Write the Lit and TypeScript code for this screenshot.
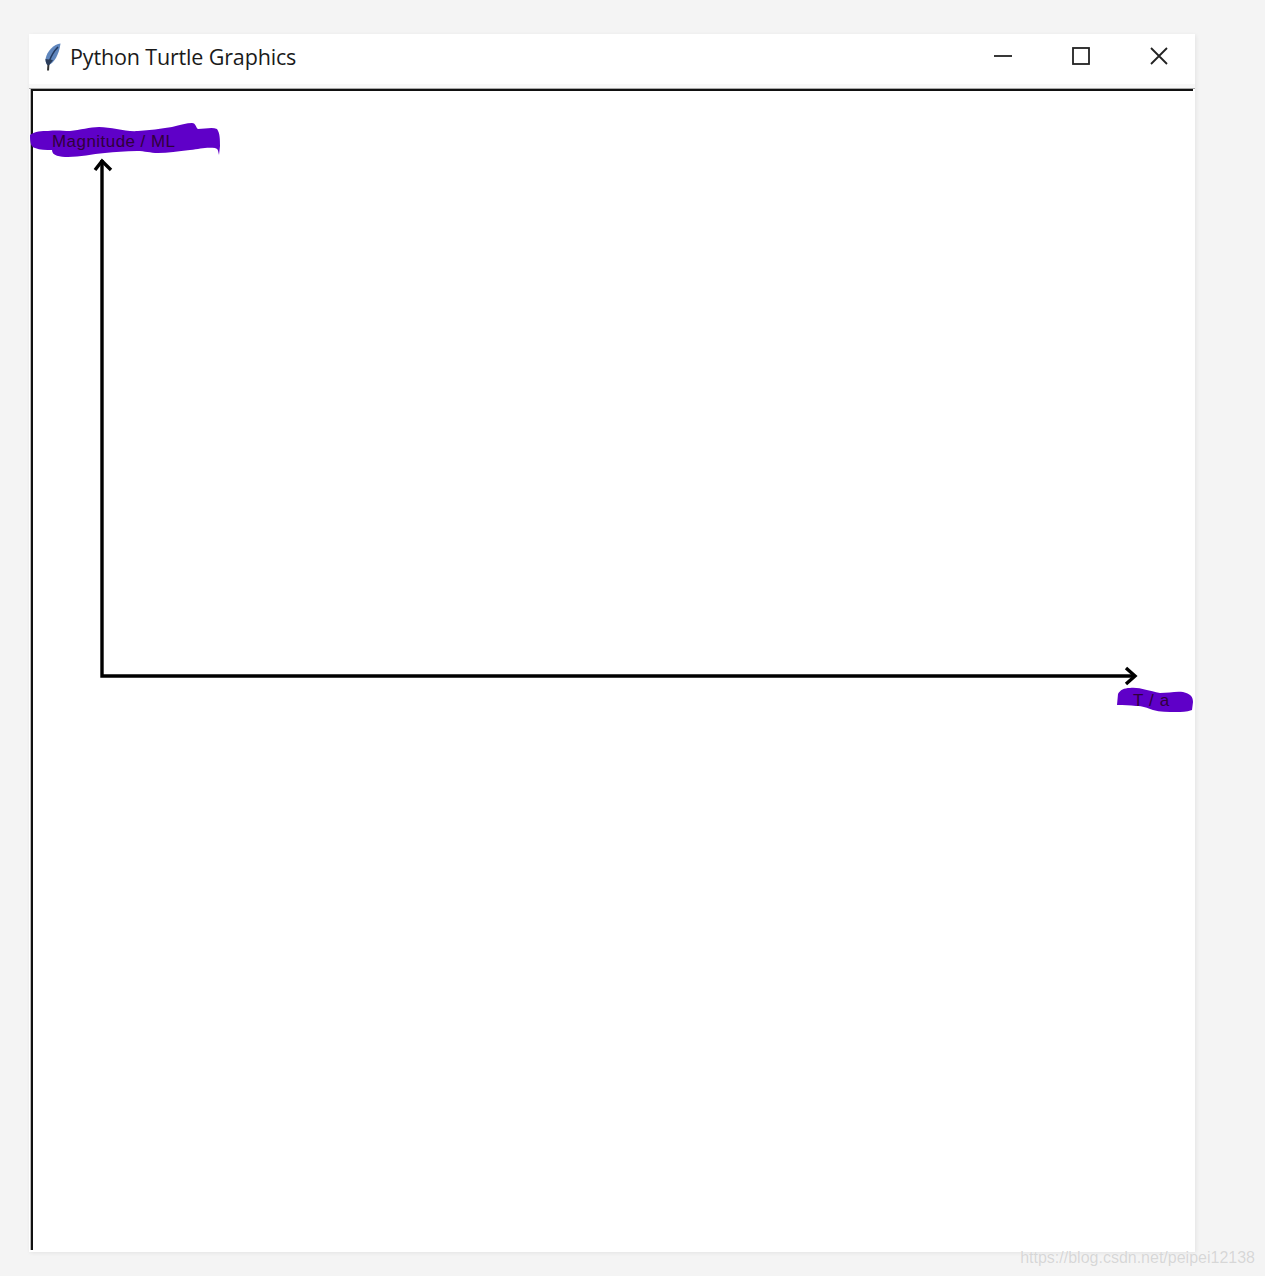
import { LitElement, html, css, svg } from "lit";
import { customElement } from "lit/decorators.js";

@customElement("app-root")
export class AppRoot extends LitElement {
  static styles = css`
    :host {
      display: block;
      position: relative;
      height: 1276px;
      box-sizing: border-box;
      padding: 34px 70px 24px 29px;
      background: #f4f4f4;
      overflow: hidden;
    }
    .window {
      height: 100%;
      display: flex;
      flex-direction: column;
      background: #fff;
      box-shadow: 1px 1px 4px rgba(0, 0, 0, 0.07);
    }
    .titlebar {
      flex: none;
      height: 50px;
      display: flex;
      align-items: center;
      padding-left: 14px;
      background: #fff;
    }
    .feather {
      flex: none;
      width: 20px;
      height: 30px;
      margin-top: -4px;
    }
    .title {
      flex: 1;
      margin-left: 7px;
      margin-top: -6px;
      font: 21.5px "Open Sans", "Noto Sans", sans-serif;
      letter-spacing: -0.15px;
      color: #1a1a1a;
      white-space: nowrap;
    }
    .controls {
      display: flex;
      margin-right: -3px;
      margin-top: -6px;
    }
    .control {
      width: 78px;
      height: 24px;
      display: flex;
      justify-content: center;
      align-items: center;
    }
    .control svg {
      width: 22px;
      height: 22px;
    }
    .gap {
      flex: none;
      height: 5px;
      background: linear-gradient(#f8f8f8 0 4px, #a8a8a8 4px);
    }
    .canvas {
      flex: 1;
      position: relative;
      margin: 0 2px 2px 2px;
      border-top: 2px solid #111;
      border-left: 2px solid #111;
      box-shadow: -1px 0 0 #b8b8b8;
      background: #fff;
    }
    .canvas-svg {
      position: absolute;
      left: 0;
      top: 0;
      width: 1160px;
      height: 1161px;
      overflow: visible;
    }
    .label {
      font: 17px "Liberation Sans", Arial, sans-serif;
      letter-spacing: 0.45px;
      fill: #30003c;
    }
    .label-small {
      font-size: 17px;
      letter-spacing: 0.6px;
    }
    .watermark {
      position: absolute;
      right: 10px;
      bottom: 9px;
      font: 16px "Liberation Sans", Arial, sans-serif;
      color: rgba(205, 205, 205, 0.8);
      text-shadow: 0 0 1px rgba(255, 255, 255, 0.8);
      white-space: nowrap;
    }
  `;

  render() {
    return html`
      <div class="window">
        <div class="titlebar">
          <svg class="feather" viewBox="0 0 20 30">
            <path d="M17.500 1.500 C11 2 4 9 2.500 17 C2.500 20 3.500 22.500 5 23.500 C11 21 16 13 17.500 1.500 Z" fill="#5f86bd" />
            <path d="M15 5 C11 9 8 14 6 20" stroke="#22395f" stroke-width="1.600" fill="none" />
            <path d="M5.500 22 L5 28.500" stroke="#333" stroke-width="2" fill="none" />
            <path d="M2.500 17 C2.500 20 3.500 22.500 5 23.500 C7 22.500 8.500 20.500 10 18 Z" fill="#2c3d5a" />
          </svg>
          <div class="title">Python Turtle Graphics</div>
          <div class="controls">
            <div class="control">
              <svg viewBox="0 0 22 22"><path d="M2 11 H20" stroke="#222" stroke-width="1.800" /></svg>
            </div>
            <div class="control">
              <svg viewBox="0 0 22 22"><rect x="3" y="3" width="16" height="16" fill="none" stroke="#222" stroke-width="1.800" /></svg>
            </div>
            <div class="control">
              <svg viewBox="0 0 22 22"><path d="M3 3 L19 19 M19 3 L3 19" stroke="#222" stroke-width="1.800" fill="none" /></svg>
            </div>
          </div>
        </div>
        <div class="gap"></div>
        <div class="canvas">
          <svg class="canvas-svg" viewBox="33 91 1160 1161">
            ${svg`
              <path fill="#5f00c8" d="M30 135 C35 131 42 131 48 131 C58 130 62 131 70 131 C80 130 90 127 99 127 C112 127 125 132 138 131 C150 130 160 129 172 127 C180 125 187 123 192 123 C196 123 196 128 198 129 C205 129 212 127 217 129 C220 133 220 140 220 146 L219 155 C218 150 218 149 215 148 C205 147 200 149 190 150 C178 151 168 153 158 153 C150 153 145 151 137 151 C125 151 115 152 105 153 C92 154 80 157 68 157 C60 157 52 156 52 150 C46 150 40 150 35 148 C31 147 30 143 30 135 Z" />
              <path fill="#5f00c8" d="M1118 694 C1120 690 1124 688 1130 688 C1140 687 1148 691 1160 693 C1168 693 1176 691 1183 692 C1190 694 1193 696 1193 702 L1192 710 C1186 712 1182 712 1176 712 C1168 712 1160 712 1153 710 C1147 708 1143 706 1136 706 C1130 705 1124 705 1117 705 Z" />
              <text class="label" x="52" y="147">Magnitude / ML</text>
              <text class="label label-small" x="1133" y="706" xml:space="preserve">T / a</text>
              <path d="M102 160 V676 H1134" fill="none" stroke="#000" stroke-width="3.400" />
              <path d="M95 170 L102 161 L111 170" fill="none" stroke="#000" stroke-width="3.400" />
              <path d="M1126 668 L1135 676 L1126 684" fill="none" stroke="#000" stroke-width="3.400" />
            `}
          </svg>
        </div>
      </div>
      <div class="watermark">https://blog.csdn.net/peipei12138</div>
    `;
  }
}
